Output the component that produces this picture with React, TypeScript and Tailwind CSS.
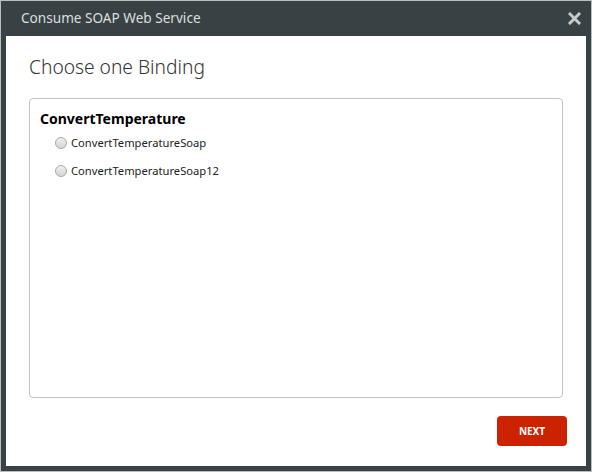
const bindings = ["ConvertTemperatureSoap", "ConvertTemperatureSoap12"];

const CloseIcon = () => (
  <svg width="13" height="13" viewBox="0 0 13 13">
    <path d="M2 2 L11 11 M11 2 L2 11" stroke="#c5caca" strokeWidth="3" strokeLinecap="square" />
  </svg>
);

const Radio = () => (
  <span className="inline-block w-[12px] h-[12px] rounded-full border border-[#a8a8a8] bg-gradient-to-b from-[#f0f0f0] to-[#d4d4d4]" />
);

const App = () => {
  return (
    <div
      className="w-[592px] h-[472px] bg-[#b9bfbf] p-px"
      style={{ fontFamily: '"Noto Sans", "Open Sans", sans-serif' }}
    >
      <div className="w-full h-full bg-[#384244] flex flex-col px-[5px] pb-[5px]">
        <div className="h-[35px] flex items-center justify-between pl-[15px] pr-[5px]">
          <span className="text-[13.6px] text-[#dcdfdf]">Consume SOAP Web Service</span>
          <CloseIcon />
        </div>
        <div className="flex-1 bg-white flex flex-col pl-[23px] pr-[23px]">
          <div className="h-[62px] flex items-center">
            <h1 className="text-[19.2px] text-[#333] font-light">Choose one Binding</h1>
          </div>
          <div className="h-[300px] border border-[#c3c3c3] rounded-[4px] px-[10px] pt-[9px]">
            <div className="text-[14px] font-bold text-black leading-[21px]">ConvertTemperature</div>
            <div className="flex flex-col">
              {bindings.map((b) => (
                <label key={b} className="h-[28px] flex items-center gap-[4px] pl-[15px] text-[11.2px] text-[#222]">
                  <Radio />
                  {b}
                </label>
              ))}
            </div>
          </div>
          <div className="flex justify-end mt-[18px] mr-[-4px]">
            <button className="w-[70px] h-[30px] rounded-[4px] bg-[#cc2200] text-white text-[10px] font-bold">
              NEXT
            </button>
          </div>
        </div>
      </div>
    </div>
  );
};

export default App;
